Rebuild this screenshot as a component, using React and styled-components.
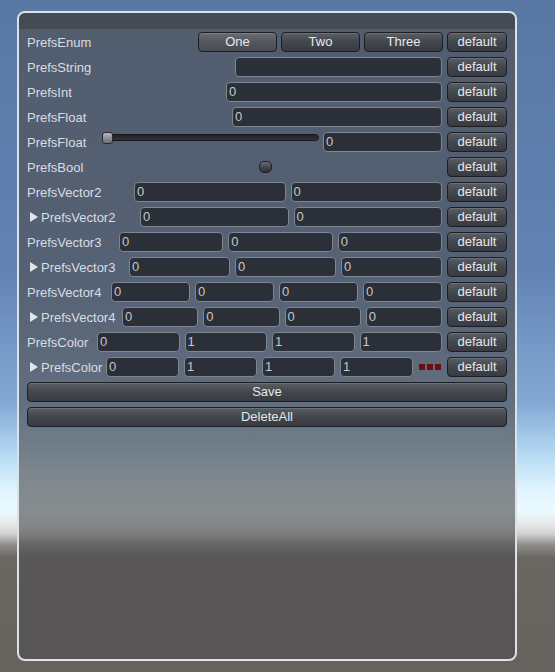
import styled, { createGlobalStyle } from 'styled-components';

const GlobalStyle = createGlobalStyle`
    html, body {
        margin: 0;
        padding: 0;
    }
    body {
        font-family: "Liberation Sans", Arial, sans-serif;
        font-size: 13px;
    }
`

const Page = styled.div`
    width: 555px;
    height: 672px;
    overflow: hidden;
    padding: 11px 0 0 17px;
    box-sizing: border-box;
    background: linear-gradient(
        to bottom,
        #5877a3 0px,
        #6283b4 270px,
        #84a8d4 403px,
        #b8dcf4 457px,
        #e0f4ff 490px,
        #eafaff 510px,
        #e6e8ea 524px,
        #d0d0d0 534px,
        #8e8c8a 545px,
        #6a6662 558px,
        #66625e 672px
    );
`

const Window = styled.div`
    width: 500px;
    height: 650px;
    box-sizing: border-box;
    border: 2px solid #dde2e6;
    border-radius: 8px;
    background: rgba(78, 78, 80, 0.64);
    overflow: hidden;
`

const TitleBar = styled.div`
    height: 16px;
    background: rgba(60, 60, 62, 0.55);
`

const Content = styled.div`
    padding: 3px 8px 0 8px;
    display: flex;
    flex-direction: column;
    gap: 5px;
`

const Row = styled.div`
    display: flex;
    align-items: center;
    gap: 5px;
    height: 20px;
`

const Label = styled.div`
    width: ${props => props.$width}px;
    flex-shrink: 0;
    display: flex;
    align-items: center;
    color: #d9dde2;
    white-space: nowrap;
    padding-left: ${props => props.$fold ? '3px' : '0'};
    box-sizing: border-box;
`

const FoldArrow = styled.span`
    width: 0;
    height: 0;
    border-left: 8px solid #e2e4e6;
    border-top: 5px solid transparent;
    border-bottom: 5px solid transparent;
    margin-right: 3px;
`

const Field = styled.div`
    flex: 1;
    min-width: 0;
    height: 20px;
    box-sizing: border-box;
    border: 1px solid #7e868f;
    border-radius: 4px;
    background: #2b2f37;
    color: #c4c8cd;
    padding-left: 2px;
    line-height: 18px;
    overflow: hidden;
`

const Button = styled.div`
    height: 20px;
    box-sizing: border-box;
    border: 1px solid #1c1e22;
    border-radius: 4px;
    background: ${props => props.$on
        ? 'linear-gradient(to bottom, #6a6e73 0%, #55595f 45%, #484c52 100%)'
        : 'linear-gradient(to bottom, #5a5e65 0%, #44484f 45%, #383b41 100%)'};
    box-shadow: inset 0 1px 0 rgba(255, 255, 255, 0.12);
    color: #e8e8e8;
    text-align: center;
    line-height: 18px;
    white-space: nowrap;
    width: ${props => props.$width ? props.$width + 'px' : 'auto'};
    flex: ${props => props.$width ? '0 0 auto' : '1'};
`

const EnumGroup = styled.div`
    display: flex;
    gap: 4px;
    margin-right: -1px;
`

const Spacer = styled.div`
    flex: 1;
`

const Slider = styled.div`
    position: relative;
    width: 217px;
    flex-shrink: 0;
    height: 20px;
    align-self: flex-start;
    margin-right: -1px;
`

const Track = styled.div`
    margin-top: 2px;
    height: 7px;
    box-sizing: border-box;
    border: 1px solid #15171a;
    border-radius: 4px;
    background: linear-gradient(to bottom, #1e2126, #30343a);
`

const Thumb = styled.div`
    position: absolute;
    left: 0;
    top: 0;
    width: 11px;
    height: 12px;
    box-sizing: border-box;
    border: 1px solid #2a2c30;
    border-radius: 3px;
    background: linear-gradient(to bottom, #b4b8bb 0%, #8d9194 50%, #6c7074 100%);
`

const Toggle = styled.div`
    width: 13px;
    height: 12px;
    flex-shrink: 0;
    align-self: flex-start;
    margin-top: 4px;
    box-sizing: border-box;
    border: 1px solid #1a1c20;
    border-radius: 5px;
    background: linear-gradient(to bottom, #6a6e74 0%, #45494f 50%, #2e3136 100%);
`

const Swatches = styled.div`
    width: 24px;
    flex-shrink: 0;
    display: flex;
    justify-content: center;
    gap: 2px;
`

const Swatch = styled.span`
    width: 6px;
    height: 6px;
    background: #6e0e0e;
`

const DefaultButton = () => <Button $width={60}>default</Button>

const vectorRows = [
    { name: 'PrefsVector2', width: 102, values: ['0', '0'] },
    { name: 'PrefsVector2', width: 108, values: ['0', '0'], fold: true },
    { name: 'PrefsVector3', width: 87, values: ['0', '0', '0'] },
    { name: 'PrefsVector3', width: 97, values: ['0', '0', '0'], fold: true },
    { name: 'PrefsVector4', width: 79, values: ['0', '0', '0', '0'] },
    { name: 'PrefsVector4', width: 90, values: ['0', '0', '0', '0'], fold: true },
    { name: 'PrefsColor', width: 65, values: ['0', '1', '1', '1'] },
]

function App() {
    return (
        <Page>
            <GlobalStyle />
            <Window>
                <TitleBar />
                <Content>
                    <Row>
                        <Label $width={166}>PrefsEnum</Label>
                        <EnumGroup>
                            <Button $width={79} $on>One</Button>
                            <Button $width={79}>Two</Button>
                            <Button $width={79}>Three</Button>
                        </EnumGroup>
                        <DefaultButton />
                    </Row>
                    <Row>
                        <Label $width={203}>PrefsString</Label>
                        <Field></Field>
                        <DefaultButton />
                    </Row>
                    <Row>
                        <Label $width={194}>PrefsInt</Label>
                        <Field>0</Field>
                        <DefaultButton />
                    </Row>
                    <Row>
                        <Label $width={200}>PrefsFloat</Label>
                        <Field>0</Field>
                        <DefaultButton />
                    </Row>
                    <Row>
                        <Label $width={70}>PrefsFloat</Label>
                        <Slider>
                            <Track />
                            <Thumb />
                        </Slider>
                        <Field>0</Field>
                        <DefaultButton />
                    </Row>
                    <Row>
                        <Label $width={227}>PrefsBool</Label>
                        <Toggle />
                        <Spacer />
                        <DefaultButton />
                    </Row>
                    {vectorRows.map((row, i) => (
                        <Row key={i}>
                            <Label $width={row.width} $fold={row.fold}>
                                {row.fold && <FoldArrow />}
                                {row.name}
                            </Label>
                            {row.values.map((v, j) => <Field key={j}>{v}</Field>)}
                            <DefaultButton />
                        </Row>
                    ))}
                    <Row>
                        <Label $width={74} $fold>
                            <FoldArrow />
                            PrefsColor
                        </Label>
                        <Field>0</Field>
                        <Field>1</Field>
                        <Field>1</Field>
                        <Field>1</Field>
                        <Swatches>
                            <Swatch />
                            <Swatch />
                            <Swatch />
                        </Swatches>
                        <DefaultButton />
                    </Row>
                    <Row>
                        <Button>Save</Button>
                    </Row>
                    <Row>
                        <Button>DeleteAll</Button>
                    </Row>
                </Content>
            </Window>
        </Page>
    )
}

export default App;
